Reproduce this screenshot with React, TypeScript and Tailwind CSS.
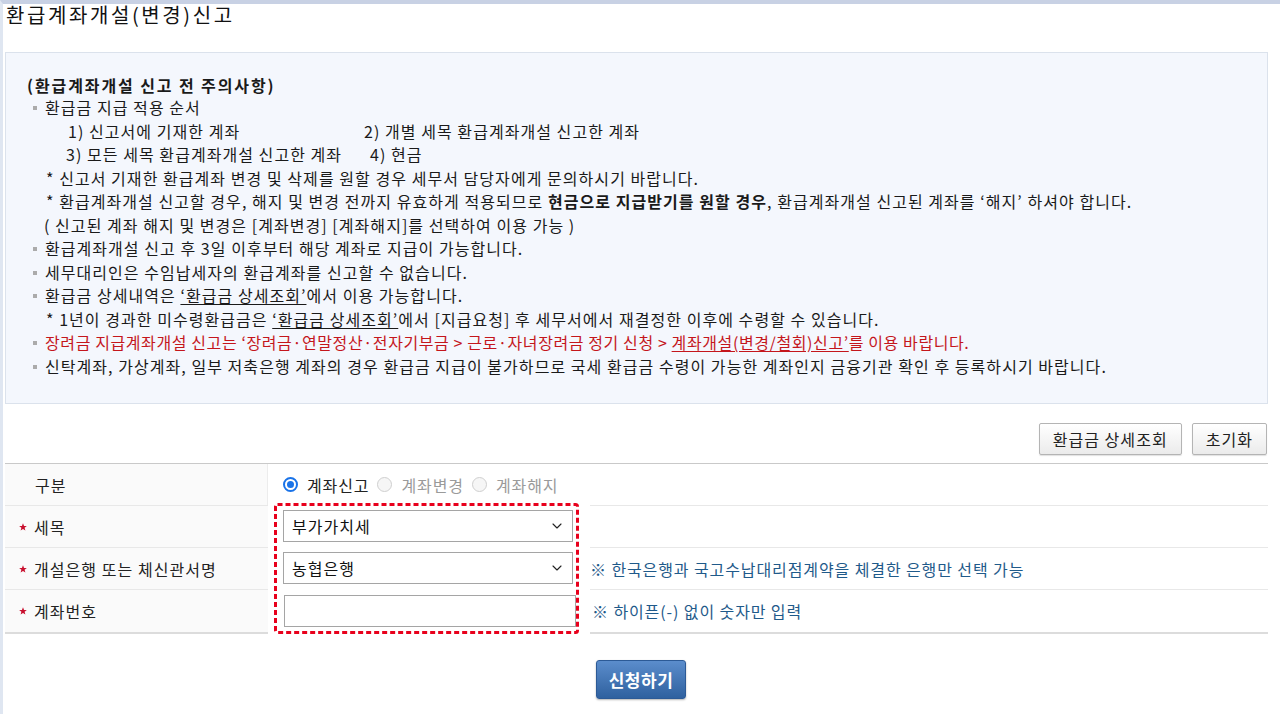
import React from "react";
import { ChevronDown } from "lucide-react";

const Bullet = () => (
  <span className="inline-block w-[4px] h-[4px] bg-[#ababab] align-middle mr-[8px] mb-[3px]" />
);

const Star = () => (
  <svg width="8" height="8" viewBox="0 0 10 10" className="shrink-0">
    <path
      d="M5 0.3 L6.3 3.6 L9.8 3.7 L7 5.9 L8 9.5 L5 7.4 L2 9.5 L3 5.9 L0.2 3.7 L3.7 3.6 Z"
      fill="#c8102e"
    />
  </svg>
);

function Radio({ checked, label }: { checked?: boolean; label: string }) {
  return (
    <span className="flex items-center">
      {checked ? (
        <span className="w-[15px] h-[15px] rounded-full border-2 border-[#1a73e8] bg-white flex items-center justify-center">
          <span className="w-[7px] h-[7px] rounded-full bg-[#1a73e8]" />
        </span>
      ) : (
        <span className="w-[15px] h-[15px] rounded-full border border-[#cfcfcf] bg-[#f6f6f6]" />
      )}
      <span className={`ml-[9px] mr-[8px] tracking-[0.9px] ${checked ? "text-[#222]" : "text-[#9a9a9a]"}`}>{label}</span>
    </span>
  );
}

function SelectBox({ value }: { value: string }) {
  return (
    <div className="h-[32px] w-[290px] ml-[9px] border border-[#a5a5a5] bg-white flex items-center justify-between pl-[8px] pr-[7px] text-[16px] text-[#111]">
      <span>{value}</span>
      <ChevronDown size={16} strokeWidth={1.7} color="#222" />
    </div>
  );
}

export default function App() {
  return (
    <div className="min-h-[714px] bg-white border-t-4 border-t-[#c8d1e4] border-l-[3px] border-l-[#dfe6f1] font-['Noto_Sans_CJK_KR','Noto_Sans',sans-serif] text-[#1a1a1a] tracking-[1.05px] pl-[2px] pr-[12px]">
      <h1 className="text-[20px] leading-[22px] ml-px text-[#111] font-normal tracking-[2.6px]">환급계좌개설(변경)신고</h1>

      <div className="mt-[26px] border border-[#dbe2ec] bg-[#f4f7fd] pl-[21px] pt-[22px] pb-[25px] text-[16px]">
        <div className="font-bold leading-[21px] tracking-[1.9px]">(환급계좌개설 신고 전 주의사항)</div>
        <div className="leading-[23.5px]">
          <div className="pl-[6px]">
            <Bullet />환급금 지급 적용 순서
          </div>
          <div className="pl-[41px] flex">
            <span className="w-[296px]">1) 신고서에 기재한 계좌</span>
            <span>2) 개별 세목 환급계좌개설 신고한 계좌</span>
          </div>
          <div className="pl-[39px] flex">
            <span className="w-[304px]">3) 모든 세목 환급계좌개설 신고한 계좌</span>
            <span>4) 현금</span>
          </div>
          <div className="pl-[19px]">* 신고서 기재한 환급계좌 변경 및 삭제를 원할 경우 세무서 담당자에게 문의하시기 바랍니다.</div>
          <div className="pl-[19px]">
            * 환급계좌개설 신고할 경우, 해지 및 변경 전까지 유효하게 적용되므로{" "}
            <b className="font-bold">현금으로 지급받기를 원할 경우</b>, 환급계좌개설 신고된 계좌를 ‘해지’ 하셔야 합니다.
          </div>
          <div className="pl-[17px]">( 신고된 계좌 해지 및 변경은 [계좌변경] [계좌해지]를 선택하여 이용 가능 )</div>
          <div className="pl-[6px]">
            <Bullet />환급계좌개설 신고 후 3일 이후부터 해당 계좌로 지급이 가능합니다.
          </div>
          <div className="pl-[6px]">
            <Bullet />세무대리인은 수임납세자의 환급계좌를 신고할 수 없습니다.
          </div>
          <div className="pl-[6px]">
            <Bullet />환급금 상세내역은 <span className="underline underline-offset-2">‘환급금 상세조회’</span>에서 이용 가능합니다.
          </div>
          <div className="pl-[19px]">
            * 1년이 경과한 미수령환급금은 <span className="underline underline-offset-2">‘환급금 상세조회’</span>에서 [지급요청] 후 세무서에서 재결정한 이후에 수령할 수 있습니다.
          </div>
          <div className="pl-[6px] text-[#c4161c] tracking-[0.6px]">
            <Bullet />장려금 지급계좌개설 신고는 ‘장려금·연말정산·전자기부금 &gt; 근로·자녀장려금 정기 신청 &gt;{" "}
            <span className="underline underline-offset-2">계좌개설(변경/철회)신고’</span>를 이용 바랍니다.
          </div>
          <div className="pl-[6px]">
            <Bullet />신탁계좌, 가상계좌, 일부 저축은행 계좌의 경우 환급금 지급이 불가하므로 국세 환급금 수령이 가능한 계좌인지 금융기관 확인 후 등록하시기 바랍니다.
          </div>
        </div>
      </div>

      <div className="mt-[19px] flex justify-end gap-[10px] pr-px">
        <button className="h-[32px] px-[13px] border border-[#b4b4b4] rounded-[2px] bg-linear-to-b from-white to-[#ebebeb] text-[16px] text-[#222] shadow-[0_1px_1px_rgba(0,0,0,0.12)]">
          환급금 상세조회
        </button>
        <button className="h-[32px] px-[13px] border border-[#b4b4b4] rounded-[2px] bg-linear-to-b from-white to-[#ebebeb] text-[16px] text-[#222] shadow-[0_1px_1px_rgba(0,0,0,0.12)]">
          초기화
        </button>
      </div>

      <div className="mt-[8px] border-t border-t-[#c9c9c9] border-b-2 border-b-[#dcdcdc] text-[16px]">
        <div className="flex h-[42px] border-b border-b-[#e8e8e8]">
          <div className="w-[263px] bg-[#fafafa] border-r border-r-[#ececec] flex items-center pl-[30px] text-[#222]">구분</div>
          <div className="flex items-center pl-[15px]">
            <Radio checked label="계좌신고" />
            <Radio label="계좌변경" />
            <Radio label="계좌해지" />
          </div>
        </div>
        <div className="flex">
          <div className="w-[263px] bg-[#fafafa] text-[#222]">
            <div className="h-[42px] border-b border-b-[#e8e8e8] flex items-center pl-[14px] gap-[7px]">
              <Star />
              세목
            </div>
            <div className="h-[42px] border-b border-b-[#e8e8e8] flex items-center pl-[14px] gap-[7px]">
              <Star />
              개설은행 또는 체신관서명
            </div>
            <div className="h-[42px] flex items-center pl-[14px] gap-[7px]">
              <Star />
              계좌번호
            </div>
          </div>
          <div className="w-[322px] pl-[6px] -mt-[3px] -mb-[2px] bg-white">
            <div className="relative w-[305px] h-[131px] bg-white">
              <svg className="absolute inset-0" width="305" height="131">
                <rect
                  x="1.5"
                  y="1.5"
                  width="302"
                  height="128"
                  rx="2"
                  fill="none"
                  stroke="#e8001c"
                  strokeWidth="3"
                  strokeDasharray="5 3"
                />
              </svg>
              <div className="pt-[7px]">
                <SelectBox value="부가가치세" />
                <div className="h-[10px]" />
                <SelectBox value="농협은행" />
                <div className="h-[11px]" />
                <div className="h-[32px] w-[292px] ml-[10px] border border-[#a5a5a5] bg-white" />
              </div>
            </div>
          </div>
          <div className="flex-1 text-[#1f5a8a] tracking-[0.9px]">
            <div className="h-[42px] border-b border-b-[#e8e8e8]" />
            <div className="h-[42px] border-b border-b-[#e8e8e8] flex items-center">
              ※ 한국은행과 국고수납대리점계약을 체결한 은행만 선택 가능
            </div>
            <div className="h-[42px] flex items-center pl-[2px]">※ 하이픈(-) 없이 숫자만 입력</div>
          </div>
        </div>
      </div>

      <div className="flex justify-center mt-[26px] pl-[9px]">
        <button className="w-[90px] h-[39px] rounded-[3px] border border-[#2c5a96] bg-linear-to-b from-[#5b8dcc] to-[#2f619f] text-white text-[17px] font-bold tracking-[0.5px] shadow-[0_1px_2px_rgba(0,0,0,0.3)]">
          신청하기
        </button>
      </div>
    </div>
  );
}
